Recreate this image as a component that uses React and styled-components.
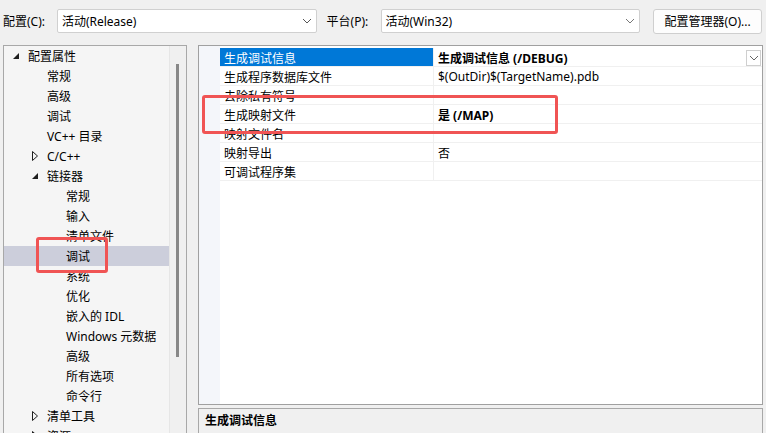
import React from 'react';
import styled, { createGlobalStyle } from 'styled-components';

const GlobalStyle = createGlobalStyle`
  html, body {
    margin: 0;
    padding: 0;
    background: #f0f0f0;
  }
  body {
    width: 766px;
    height: 433px;
    overflow: hidden;
    font-family: "Noto Sans", "Noto Sans CJK SC", sans-serif;
    font-size: 12px;
    color: #000;
  }
`;

const Page = styled.div`
  position: relative;
  width: 766px;
  height: 433px;
  overflow: hidden;
`;

const Toolbar = styled.div`
  display: flex;
  align-items: center;
  height: 42px;
  padding: 0 4px 0 3px;
  box-sizing: border-box;
`;

const Label = styled.span`
  width: ${(p) => p.width}px;
  white-space: nowrap;
  margin-left: ${(p) => p.offset || 0}px;
`;

const Select = styled.div`
  width: ${(p) => p.width}px;
  height: 24px;
  box-sizing: border-box;
  background: #fff;
  border: 1px solid #d0d0d0;
  border-radius: 2px;
  display: flex;
  align-items: center;
  justify-content: space-between;
  padding: 0 4px 0 4px;
`;

const ConfigButton = styled.div`
  margin-left: 13px;
  width: 109px;
  height: 25px;
  box-sizing: border-box;
  background: #fdfdfd;
  border: 1px solid #cfcfcf;
  border-radius: 3px;
  display: flex;
  align-items: center;
  justify-content: center;
`;

const Body = styled.div`
  display: flex;
  padding: 3px 3px 0 3px;
  gap: 11px;
`;

const TreePanel = styled.div`
  width: 184px;
  height: 400px;
  box-sizing: border-box;
  border: 1px solid #a8a8a8;
  background: #f5f5f5;
  display: flex;
`;

const TreeList = styled.div`
  flex: 1;
`;

const TreeRow = styled.div`
  height: 20px;
  display: flex;
  align-items: center;
  padding-left: ${(p) => 4 + p.level * 19}px;
  background: ${(p) => (p.selected ? '#cccedb' : 'transparent')};
  white-space: nowrap;
`;

const Toggle = styled.span`
  width: 20px;
  display: inline-flex;
  align-items: center;
  justify-content: flex-start;
  padding-left: 5px;
  box-sizing: border-box;
`;

const ScrollTrack = styled.div`
  width: 16px;
  border-left: 1px solid #e6e6e6;
  background: #f0f0f0;
`;

const ScrollThumb = styled.div`
  margin: 18px 0 0 6px;
  width: 3px;
  height: 293px;
  background: #888;
`;

const RightColumn = styled.div`
  flex: 1;
  display: flex;
  flex-direction: column;
  gap: 3px;
`;

const Grid = styled.div`
  height: 360px;
  box-sizing: border-box;
  border: 1px solid #a0a0a0;
  background: #fff;
  display: flex;
`;

const Gutter = styled.div`
  width: 21px;
  background: #f4f6fa;
`;

const GridBody = styled.div`
  flex: 1;
  padding-top: 2px;
`;

const PropRow = styled.div`
  display: flex;
  height: 18px;
  border-bottom: 1px solid #f0f0f0;
`;

const NameCell = styled.div`
  width: 214px;
  padding: 1px 0 0 4px;
  box-sizing: border-box;
  display: flex;
  align-items: center;
  background: ${(p) => (p.selected ? '#0078d7' : '#fff')};
  color: ${(p) => (p.selected ? '#fff' : '#000')};
  border-right: 1px solid #f0f0f0;
`;

const ValueCell = styled.div`
  flex: 1;
  padding: 1px 0 0 4px;
  display: flex;
  align-items: center;
  justify-content: space-between;
  font-weight: ${(p) => (p.bold ? 700 : 400)};
`;

const DropButton = styled.div`
  width: 15px;
  height: 16px;
  box-sizing: border-box;
  border: 1px solid #cfcfcf;
  background: #fff;
  margin-right: 1px;
  display: flex;
  align-items: center;
  justify-content: center;
`;

const Description = styled.div`
  height: 40px;
  box-sizing: border-box;
  border: 1px solid #a8a8a8;
  background: #f0f0f0;
  padding: 3px 6px;
`;

const DescTitle = styled.div`
  font-weight: 700;
  line-height: 17px;
`;

const DescText = styled.div`
  line-height: 17px;
  margin-top: 2px;
`;

const Callout = styled.div`
  position: absolute;
  left: ${(p) => p.x}px;
  top: ${(p) => p.y}px;
  width: ${(p) => p.w}px;
  height: ${(p) => p.h}px;
  box-sizing: border-box;
  border: 3px solid #f05454;
  border-radius: 3px;
  pointer-events: none;
`;

const Chevron = ({ color = '#555' }) => (
  <svg width="10" height="6" viewBox="0 0 10 6">
    <path d="M1 1 L5 5 L9 1" fill="none" stroke={color} strokeWidth="1" />
  </svg>
);

const Expanded = () => (
  <svg width="6" height="6" viewBox="0 0 6 6">
    <path d="M6 0 L6 6 L0 6 Z" fill="#1e1e1e" />
  </svg>
);

const Collapsed = () => (
  <svg width="6" height="10" viewBox="0 0 6 10">
    <path d="M0.5 0.5 L5.5 5 L0.5 9.5 Z" fill="none" stroke="#1e1e1e" strokeWidth="1" />
  </svg>
);

const tree = [
  { label: '配置属性', level: 0, toggle: 'open' },
  { label: '常规', level: 1 },
  { label: '高级', level: 1 },
  { label: '调试', level: 1 },
  { label: 'VC++ 目录', level: 1 },
  { label: 'C/C++', level: 1, toggle: 'closed' },
  { label: '链接器', level: 1, toggle: 'open' },
  { label: '常规', level: 2 },
  { label: '输入', level: 2 },
  { label: '清单文件', level: 2 },
  { label: '调试', level: 2, selected: true },
  { label: '系统', level: 2 },
  { label: '优化', level: 2 },
  { label: '嵌入的 IDL', level: 2 },
  { label: 'Windows 元数据', level: 2 },
  { label: '高级', level: 2 },
  { label: '所有选项', level: 2 },
  { label: '命令行', level: 2 },
  { label: '清单工具', level: 1, toggle: 'closed' },
  { label: '资源', level: 1, toggle: 'closed' },
];

const props = [
  { name: '生成调试信息', value: '生成调试信息 (/DEBUG)', bold: true, selected: true },
  { name: '生成程序数据库文件', value: '$(OutDir)$(TargetName).pdb' },
  { name: '去除私有符号', value: '' },
  { name: '生成映射文件', value: '是 (/MAP)', bold: true },
  { name: '映射文件名', value: '' },
  { name: '映射导出', value: '否' },
  { name: '可调试程序集', value: '' },
];

export default function App() {
  return (
    <Page>
      <GlobalStyle />
      <Toolbar>
        <Label width={54}>配置(C):</Label>
        <Select width={260}>
          <span>活动(Release)</span>
          <Chevron />
        </Select>
        <Label width={54} offset={10}>平台(P):</Label>
        <Select width={260}>
          <span>活动(Win32)</span>
          <Chevron color="#777" />
        </Select>
        <ConfigButton>配置管理器(O)...</ConfigButton>
      </Toolbar>

      <Body>
        <TreePanel>
          <TreeList>
            {tree.map((item, i) => (
              <TreeRow key={i} level={item.level} selected={item.selected}>
                <Toggle>
                  {item.toggle === 'open' && <Expanded />}
                  {item.toggle === 'closed' && <Collapsed />}
                </Toggle>
                {item.label}
              </TreeRow>
            ))}
          </TreeList>
          <ScrollTrack>
            <ScrollThumb />
          </ScrollTrack>
        </TreePanel>

        <RightColumn>
          <Grid>
            <Gutter />
            <GridBody>
              {props.map((p, i) => (
                <PropRow key={i}>
                  <NameCell selected={p.selected}>{p.name}</NameCell>
                  <ValueCell bold={p.bold}>
                    <span>{p.value}</span>
                    {p.selected && (
                      <DropButton>
                        <Chevron color="#666" />
                      </DropButton>
                    )}
                  </ValueCell>
                </PropRow>
              ))}
            </GridBody>
          </Grid>
          <Description>
            <DescTitle>生成调试信息</DescTitle>
            <DescText>此选项启用调试信息的创建，用于调试可执行文件或 DLL (/DEBUG)。</DescText>
          </Description>
        </RightColumn>
      </Body>

      <Callout x={36} y={237} w={72} h={36} />
      <Callout x={202} y={95} w={356} h={39} />
    </Page>
  );
}
